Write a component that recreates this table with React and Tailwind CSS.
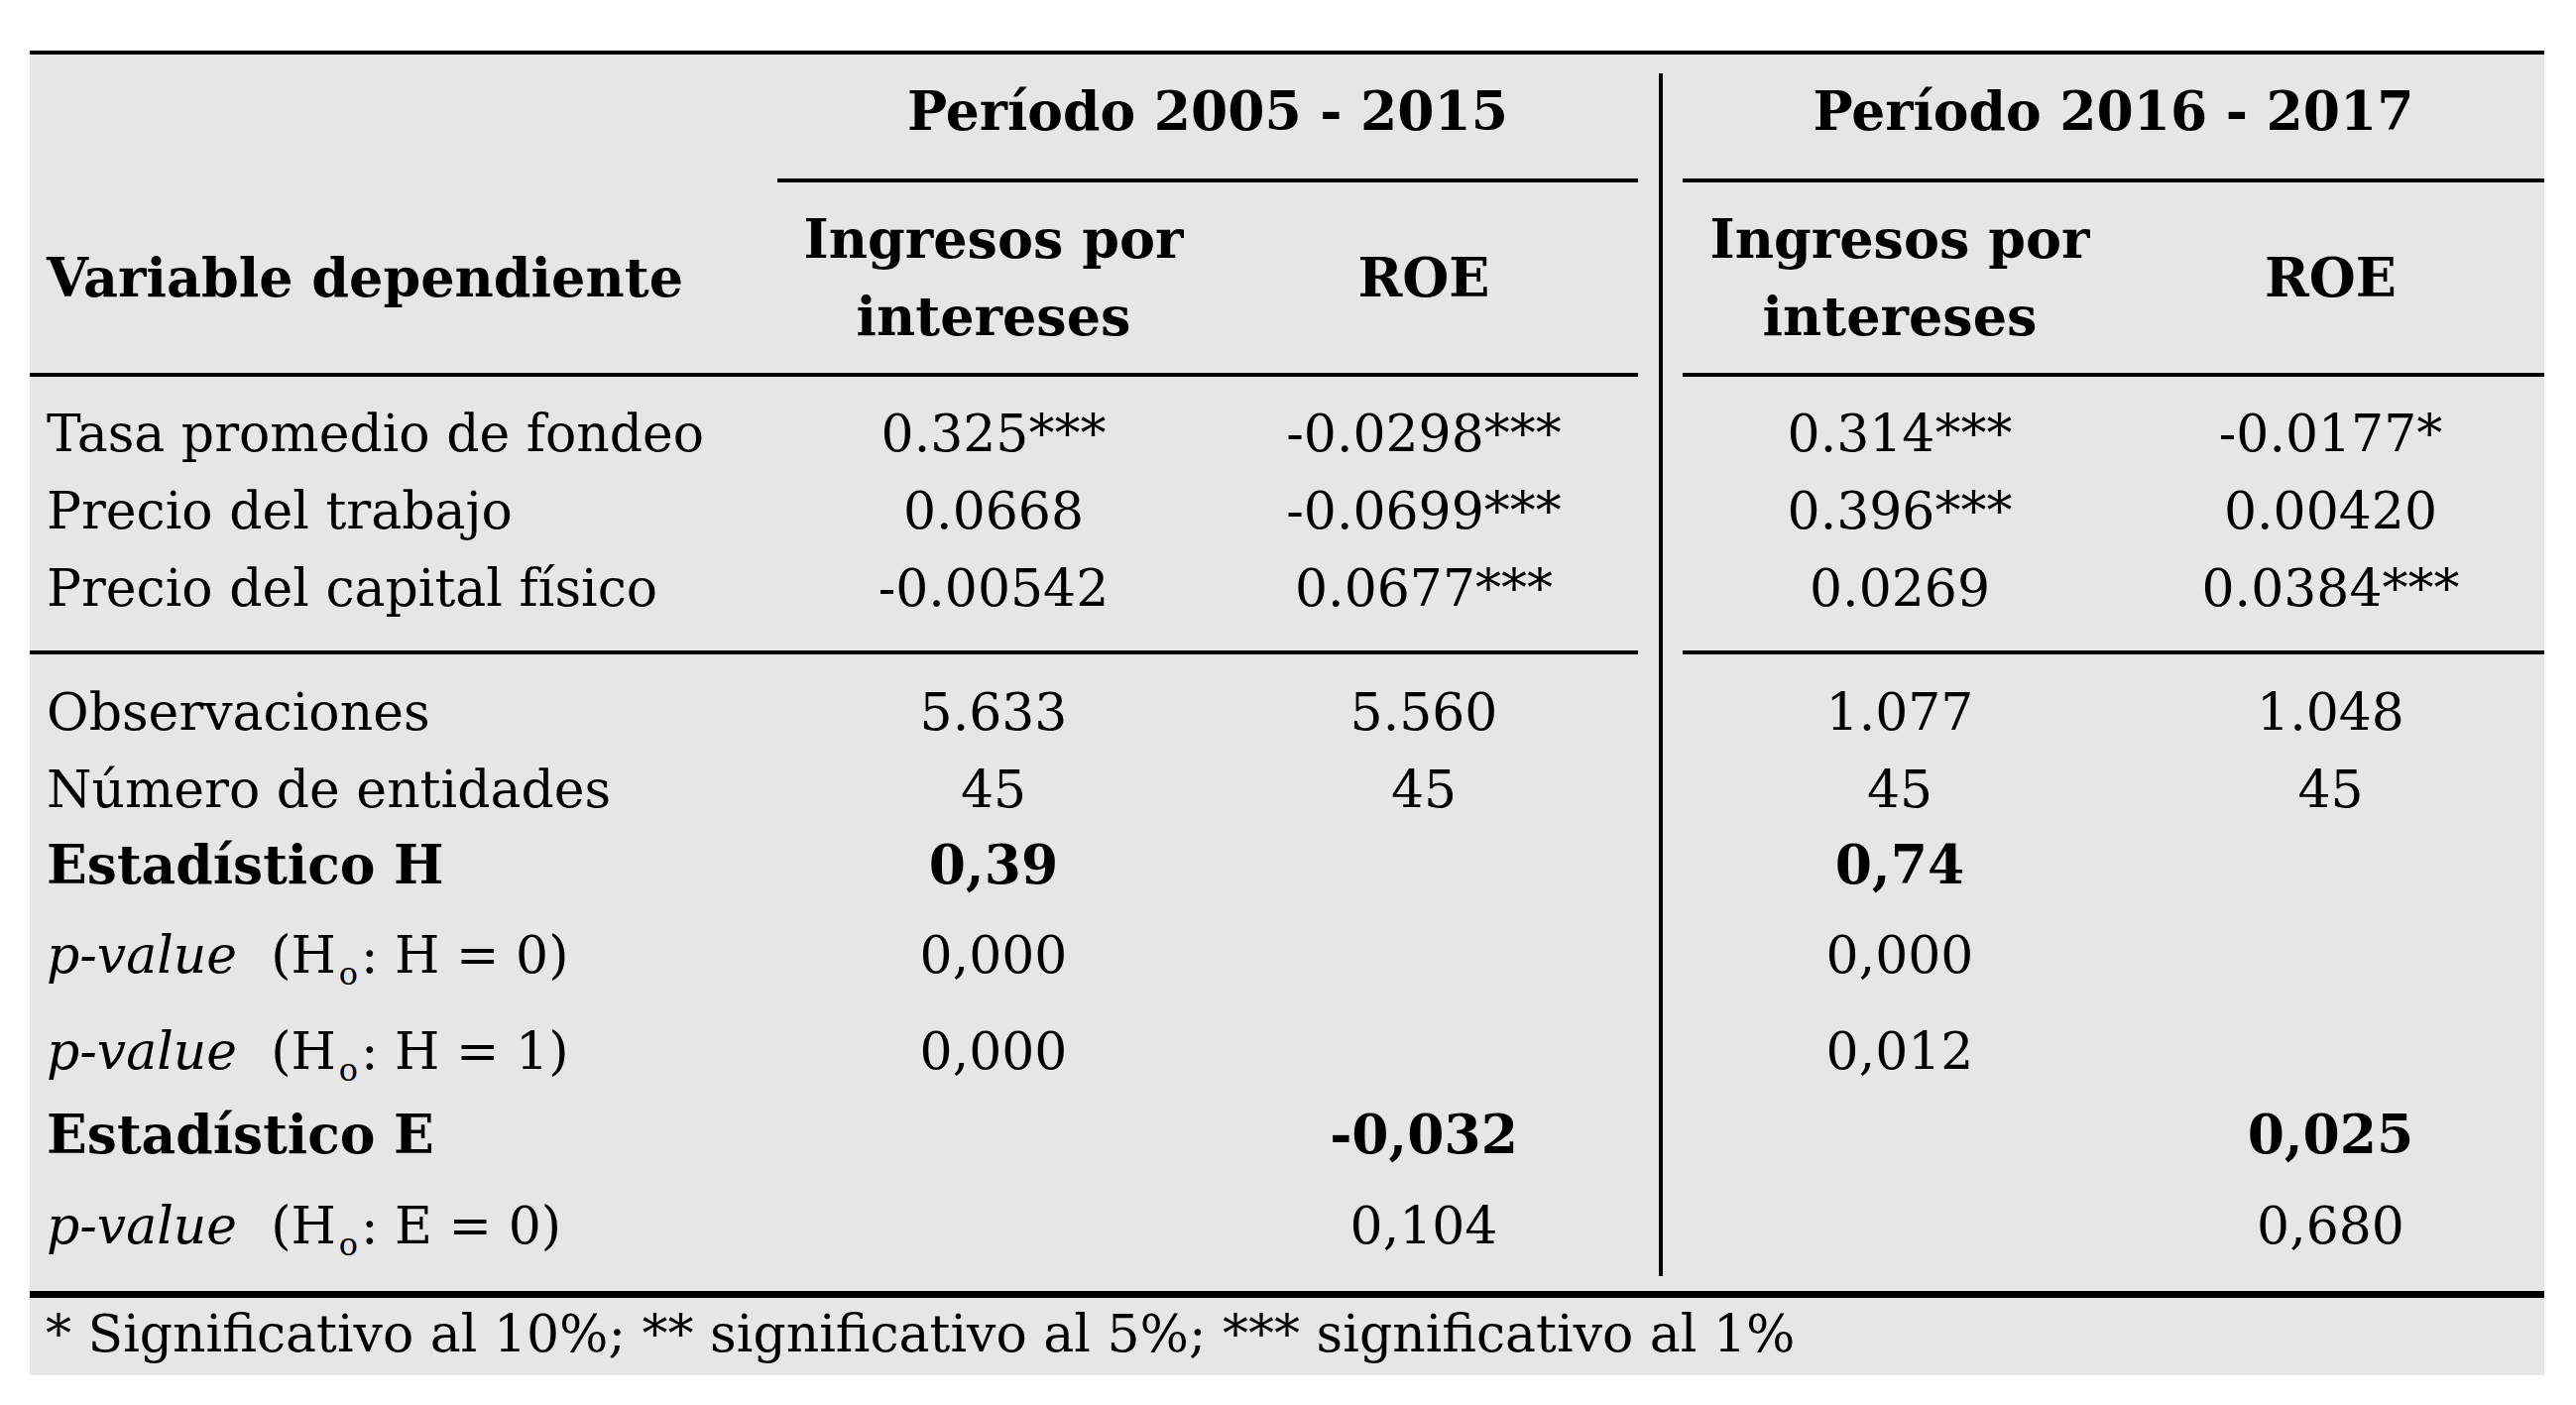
import React from "react";

const coef = [
  ["Tasa promedio de fondeo", "0.325***", "-0.0298***", "0.314***", "-0.0177*", "pt-[18px]"],
  ["Precio del trabajo", "0.0668", "-0.0699***", "0.396***", "0.00420", ""],
  ["Precio del capital físico", "-0.00542", "0.0677***", "0.0269", "0.0384***", ""],
];

function PLabel({ rhs }) {
  return (
    <span>
      <span className="italic">p-value</span>
      <span className="ml-[34px]">
        (H<sub className="text-[32px] -bottom-[12px] ml-[3px] mr-[3px]">o</sub>: {rhs})
      </span>
    </span>
  );
}

const stats = [
  [{ t: "Observaciones" }, { t: "5.633" }, { t: "5.560" }, { t: "1.077" }, { t: "1.048" }, "pt-[19px]"],
  [{ t: "Número de entidades" }, { t: "45" }, { t: "45" }, { t: "45" }, { t: "45" }, ""],
  [{ t: "Estadístico H", b: true }, { t: "0,39", b: true }, { t: "" }, { t: "0,74", b: true }, { t: "" }, ""],
  [{ p: "H = 0" }, { t: "0,000" }, { t: "" }, { t: "0,000" }, { t: "" }, ""],
  [{ p: "H = 1" }, { t: "0,000" }, { t: "" }, { t: "0,012" }, { t: "" }, ""],
  [{ t: "Estadístico E", b: true }, { t: "" }, { t: "-0,032", b: true }, { t: "" }, { t: "0,025", b: true }, ""],
  [{ p: "E = 0" }, { t: "" }, { t: "0,104" }, { t: "" }, { t: "0,680" }, ""],
];

function Content({ c }) {
  if (c.p) return <PLabel rhs={c.p} />;
  return <span className={c.b ? "font-bold text-[53.5px]" : ""}>{c.t}</span>;
}

export default function App() {
  return (
    <div className="w-[2598px] h-[1417px] bg-white pt-[51px] pl-[30px] text-black font-['DejaVu_Serif',serif]">
      <div className="w-[2536px] bg-[#e7e6e6] border-t-4 border-black">
        <div className="grid grid-cols-[754px_436px_432px_45px_438px_431px] grid-rows-[125px_4px_192px_4px_96px_78px_102px_4px_97px_77px_90px_97px_85px_91px_105px] text-[52px] leading-[78px]">
          {/* vertical divider */}
          <div className="col-start-4 row-span-full flex justify-center pt-[19px] pb-[15px]">
            <div className="w-[4px] h-full bg-black" />
          </div>

          {/* Row 1: periods */}
          <div />
          <div className="col-span-2 text-center font-bold text-[53.5px] pt-[19px]">Período 2005 - 2015</div>
          <div className="col-span-2 text-center font-bold text-[53.5px] pt-[19px]">Período 2016 - 2017</div>

          {/* Rule */}
          <div />
          <div className="col-span-2 bg-black" />
          <div className="col-span-2 bg-black" />

          {/* Row 2: column headers */}
          <div className="flex items-center pl-[17px] font-bold text-[54px]">Variable dependiente</div>
          <div className="flex items-center justify-center text-center font-bold text-[54px]">
            <span>
              Ingresos por
              <br />
              intereses
            </span>
          </div>
          <div className="flex items-center justify-center font-bold text-[54px]">ROE</div>
          <div className="flex items-center justify-center text-center font-bold text-[54px]">
            <span>
              Ingresos por
              <br />
              intereses
            </span>
          </div>
          <div className="flex items-center justify-center font-bold text-[54px]">ROE</div>

          {/* Rule */}
          <div className="col-span-3 bg-black" />
          <div className="col-span-2 bg-black" />

          {/* Coefficients */}
          {coef.map((r) => (
            <React.Fragment key={r[0]}>
              <div className={`pl-[17px] whitespace-nowrap ${r[5]}`}>{r[0]}</div>
              <div className={`text-center whitespace-nowrap ${r[5]}`}>{r[1]}</div>
              <div className={`text-center whitespace-nowrap ${r[5]}`}>{r[2]}</div>
              <div className={`text-center whitespace-nowrap ${r[5]}`}>{r[3]}</div>
              <div className={`text-center whitespace-nowrap ${r[5]}`}>{r[4]}</div>
            </React.Fragment>
          ))}

          {/* Rule */}
          <div className="col-span-3 bg-black" />
          <div className="col-span-2 bg-black" />

          {/* Stats */}
          {stats.map((r, i) => (
            <React.Fragment key={i}>
              <div className={`pl-[17px] whitespace-nowrap ${r[5]}`}>
                <Content c={r[0]} />
              </div>
              {[1, 2, 3, 4].map((j) => (
                <div key={j} className={`text-center whitespace-nowrap ${r[5]}`}>
                  <Content c={r[j]} />
                </div>
              ))}
            </React.Fragment>
          ))}
        </div>

        {/* bottom rule + footnote */}
        <div className="border-t-[7px] border-black h-[85px] pl-[16px] text-[52px] leading-[72px] whitespace-nowrap">
          * Significativo al 10%; ** significativo al 5%; *** significativo al 1%
        </div>
      </div>
    </div>
  );
}
